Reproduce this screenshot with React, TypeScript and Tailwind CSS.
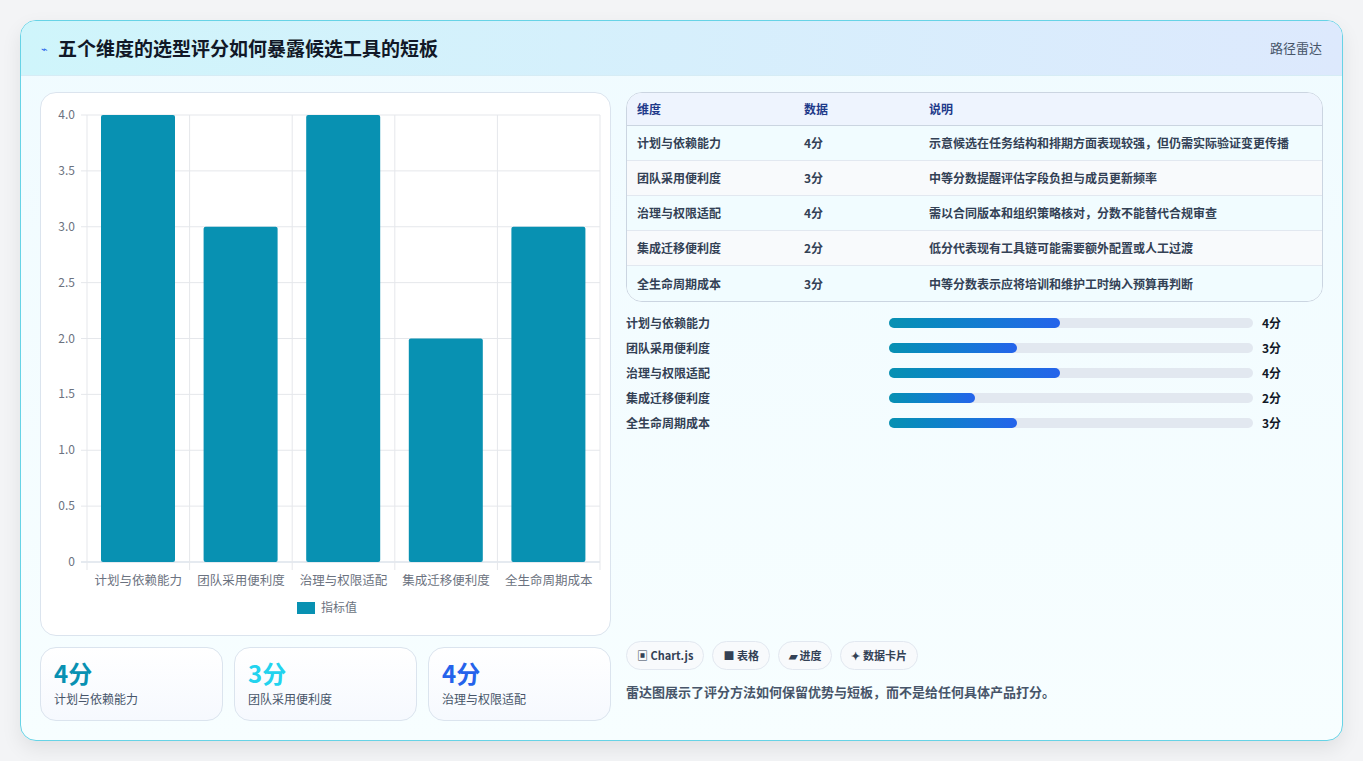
import React from 'react';

const rows = [
  { name: '计划与依赖能力', score: 4, note: '示意候选在任务结构和排期方面表现较强，但仍需实际验证变更传播' },
  { name: '团队采用便利度', score: 3, note: '中等分数提醒评估字段负担与成员更新频率' },
  { name: '治理与权限适配', score: 4, note: '需以合同版本和组织策略核对，分数不能替代合规审查' },
  { name: '集成迁移便利度', score: 2, note: '低分代表现有工具链可能需要额外配置或人工过渡' },
  { name: '全生命周期成本', score: 3, note: '中等分数表示应将培训和维护工时纳入预算再判断' },
];

const font = { fontFamily: '"Noto Sans CJK SC", "Noto Sans", sans-serif' };

const BarChart = () => {
  const x0 = 46, x1 = 559, y0 = 22, y1 = 469;
  const ticks = [0, 0.5, 1, 1.5, 2, 2.5, 3, 3.5, 4];
  const step = (x1 - x0) / 5;
  const y = (v: number) => y1 - (v / 4) * (y1 - y0);
  return (
    <svg width="570" height="540" className="block">
      {ticks.map(t => (
        <g key={t}>
          <line x1={x0 - 6} x2={x1} y1={y(t)} y2={y(t)} stroke={t === 0 ? '#cbd5e1' : '#e5e7eb'} />
          <text x={x0 - 12} y={y(t) + 4} textAnchor="end" fontSize="12" fill="#6b7280" style={font}>{t === 0 ? '0' : t.toFixed(1)}</text>
        </g>
      ))}
      {[0, 1, 2, 3, 4, 5].map(i => (
        <line key={i} x1={x0 + i * step} x2={x0 + i * step} y1={y0} y2={y1 + 8} stroke="#e5e7eb" />
      ))}
      {rows.map((r, i) => (
        <g key={r.name}>
          <rect x={x0 + i * step + 14} y={y(r.score)} width={74} height={y1 - y(r.score)} rx="2" fill="#0891b2" />
          <text x={x0 + i * step + step / 2} y={y1 + 23} textAnchor="middle" fontSize="12.5" fill="#6b7280" style={font}>{r.name}</text>
        </g>
      ))}
      <rect x={256} y={509} width={18} height={12} fill="#0891b2" />
      <text x={280} y={519} fontSize="12" fill="#6b7280" style={font}>指标值</text>
    </svg>
  );
};

const stats = [
  { v: '4分', c: 'text-[#0891b2]', l: '计划与依赖能力' },
  { v: '3分', c: 'text-[#22d3ee]', l: '团队采用便利度' },
  { v: '4分', c: 'text-[#2563eb]', l: '治理与权限适配' },
];

export default function App() {
  return (
    <div className="min-h-screen bg-[#f3f4f6] p-[20px] pb-[20px]" style={font}>
      <div className="rounded-2xl border border-[#67d3e6] bg-gradient-to-b from-[#f0fbff] to-[#f7feff] overflow-hidden shadow-[0_8px_20px_rgba(0,0,0,0.08)] h-[721px] flex flex-col">
        <div className="h-[55px] flex items-center justify-between px-[20px] bg-gradient-to-r from-[#cff5fb] to-[#dde9fd] border-b border-[#d6ecf5]">
          <div className="flex items-center gap-[10px]">
            <span className="text-[11px] text-[#2563eb]">⌁</span>
            <h1 className="text-[19px] font-bold text-[#111827]">五个维度的选型评分如何暴露候选工具的短板</h1>
          </div>
          <span className="text-[13px] text-[#475569]">路径雷达</span>
        </div>
        <div className="flex gap-[15px] px-[19px] pt-[16px]">
          <div className="w-[571px] flex flex-col gap-[11px]">
            <div className="h-[544px] rounded-2xl border border-[#dbe4ee] bg-white">
              <BarChart />
            </div>
            <div className="grid grid-cols-3 gap-[11px]">
              {stats.map(s => (
                <div key={s.l} className="h-[74px] rounded-2xl border border-[#dbe4ee] bg-gradient-to-b from-white to-[#f6f9fe] px-[13px] pt-[10px]">
                  <div className={`text-[24px] font-bold leading-[30px] ${s.c}`}>{s.v}</div>
                  <div className="text-[12px] text-[#475569] mt-[2px]">{s.l}</div>
                </div>
              ))}
            </div>
          </div>
          <div className="flex-1 flex flex-col">
            <div className="rounded-2xl border border-[#cbd5e1] overflow-hidden bg-white">
              <div className="grid grid-cols-[167px_125px_1fr] h-[33px] items-center bg-[#eef4fe] border-b border-[#cbd5e1] px-[10px] text-[12px] font-semibold text-[#1e3a8a]">
                <span>维度</span><span>数据</span><span>说明</span>
              </div>
              {rows.map((r, i) => (
                <div key={r.name} className={`grid grid-cols-[167px_125px_1fr] h-[35px] items-center px-[10px] text-[12px] font-semibold text-[#334155] ${i < 4 ? 'border-b border-[#e2e8f0]' : ''} ${i % 2 ? 'bg-[#f8fafc]' : 'bg-[#f1fcff]'}`}>
                  <span>{r.name}</span><span>{r.score}分</span><span>{r.note}</span>
                </div>
              ))}
            </div>
            <div className="flex flex-col gap-[7px] mt-[12px]">
              {rows.map(r => (
                <div key={r.name} className="flex items-center h-[18px] text-[12px] font-semibold text-[#334155]">
                  <span className="w-[263px]">{r.name}</span>
                  <div className="w-[364px] h-[10px] rounded-full bg-[#e2e8f0]">
                    <div className="h-full rounded-full bg-gradient-to-r from-[#0891b2] to-[#2563eb]" style={{ width: `${r.score * 11.75}%` }} />
                  </div>
                  <span className="ml-[9px] text-[#111827]">{r.score}分</span>
                </div>
              ))}
            </div>
            <div className="flex-1" />
            <div className="flex gap-[8px] mb-[12px]">
              {['▣ Chart.js', '■ 表格', '▰ 进度', '✦ 数据卡片'].map(t => (
                <span key={t} className="h-[29px] px-[10px] flex items-center rounded-full border border-[#e2e8f0] bg-[#f8fafc] text-[11px] font-semibold text-[#334155]">{t}</span>
              ))}
            </div>
            <p className="text-[13px] font-semibold text-[#475569] mb-[20px]">雷达图展示了评分方法如何保留优势与短板，而不是给任何具体产品打分。</p>
          </div>
        </div>
      </div>
    </div>
  );
}
